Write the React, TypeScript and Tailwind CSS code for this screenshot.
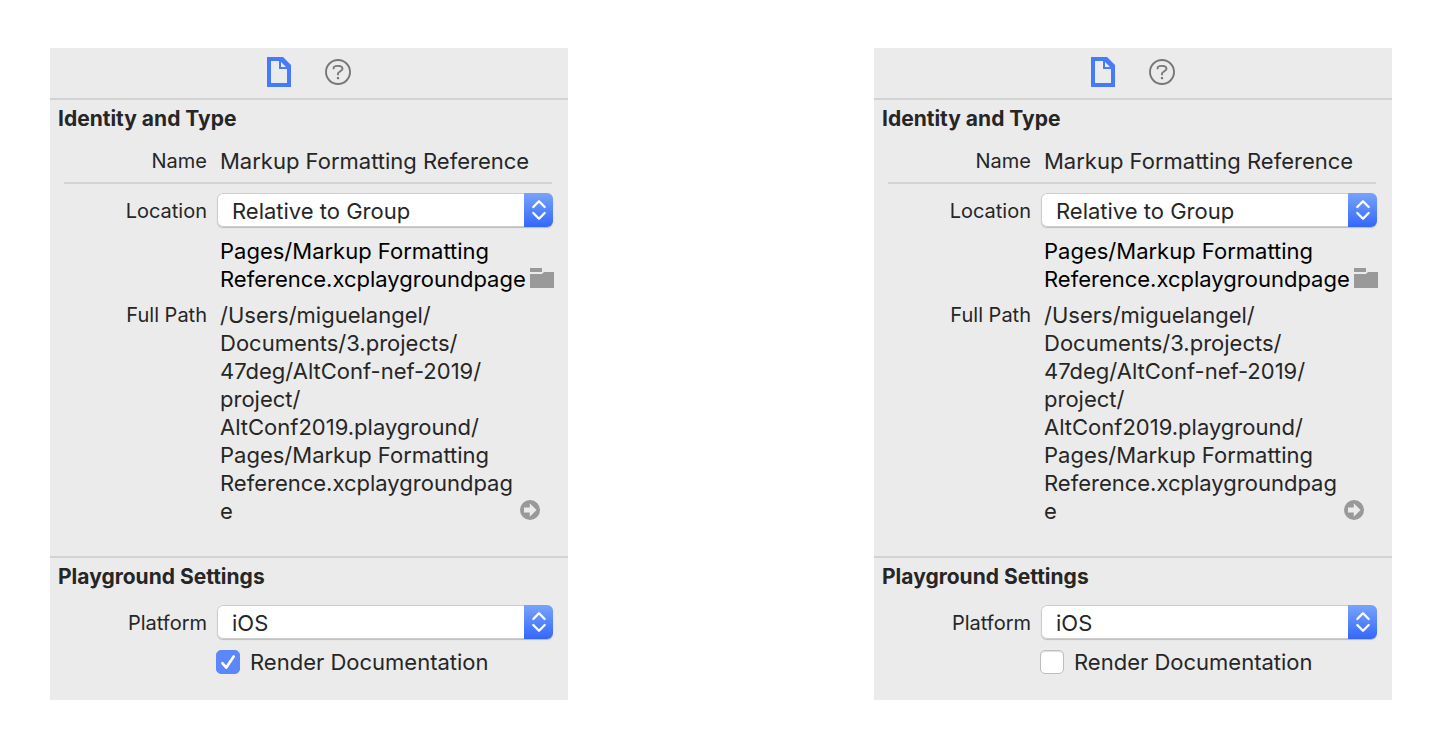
import { useId, useState } from "react";
import type { ReactNode } from "react";

const locationLines = ["Pages/Markup Formatting", "Reference.xcplaygroundpage"];

const fullPathLines = [
  "/Users/miguelangel/",
  "Documents/3.projects/",
  "47deg/AltConf-nef-2019/",
  "project/",
  "AltConf2019.playground/",
  "Pages/Markup Formatting",
  "Reference.xcplaygroundpag",
  "e",
];

function Row({ label, htmlFor, children }: { label?: string; htmlFor?: string; children: ReactNode }) {
  return (
    <div className="grid grid-cols-[157px_minmax(0,1fr)] gap-x-[9px] pr-[14px]">
      {htmlFor ? (
        <label htmlFor={htmlFor} className="text-right text-[20px] leading-[28px] pt-1">
          {label}
        </label>
      ) : (
        <span className="text-right text-[20px] leading-[28px]">{label}</span>
      )}
      {children}
    </div>
  );
}

function Lines({ lines }: { lines: string[] }) {
  return (
    <p className="pl-1 whitespace-nowrap">
      {lines.map((line) => (
        <span key={line} className="block">
          {line}
        </span>
      ))}
    </p>
  );
}

function PopUp({ id, options }: { id: string; options: string[] }) {
  return (
    <div className="ml-px mr-px flex h-[34px] overflow-hidden rounded-[6px] bg-white shadow-[inset_0_0_0_1px_#cdcdcd,0_1px_1px_#bcbcbc] relative">
      <select
        id={id}
        className="h-full w-full appearance-none bg-transparent pt-px pl-[15px] pr-8 text-[22px] leading-[28px] text-[#262626] outline-none"
      >
        {options.map((option) => (
          <option key={option}>{option}</option>
        ))}
      </select>
      <span className="pointer-events-none absolute inset-y-0 right-0 flex w-[29px] items-center justify-center bg-linear-to-b from-[#78a2fa] to-[#3566fb]">
        <svg width="16" height="24" viewBox="0 0 16 24" fill="none" stroke="#fff" strokeWidth="2.3" strokeLinecap="round" strokeLinejoin="round" aria-hidden="true">
          <path d="M2.300 9 8 3.200 13.700 9M2.300 15 8 20.800 13.700 15" />
        </svg>
      </span>
    </div>
  );
}

function Inspector({ rendered }: { rendered: boolean }) {
  const id = useId();
  const [checked, setChecked] = useState(rendered);

  return (
    <section className="w-full max-w-[518px] bg-[#ebebeb] pb-6 text-[22px] leading-[28px] text-[#262626]">
      <nav className="flex h-[52px] items-start justify-center gap-[33px] border-b-2 border-[#d3d3d3] pt-[9px]">
        <button type="button" aria-label="File inspector">
          <svg className="block" width="25" height="30" viewBox="0 0 25 30" aria-hidden="true">
            <path d="M0 0H16L24 8V30H0Z" fill="#457bfb" />
            <path d="M4 4H12V12H20V26H4Z" fill="#ebebeb" />
            <path d="M14 5 19 10H14Z" fill="#ebebeb" />
          </svg>
        </button>
        <button type="button" aria-label="Quick help" className="pt-[2px]">
          <svg className="block" width="26" height="26" viewBox="0 0 26 26" fill="none" stroke="#777" strokeWidth="1.9" aria-hidden="true">
            <circle cx="13" cy="13" r="12" />
            <path d="M8.600 10.200V9.200C8.600 7.500 10 6.900 13 6.900s4.500.8 4.500 2.900c0 2.600-4.500 2.700-4.500 4.700v1.800" />
            <path d="M13 18v2.200" strokeWidth="2.200" />
          </svg>
        </button>
      </nav>

      <h2 className="px-2 pt-[5px] text-[21px] font-bold">Identity and Type</h2>
      <div className="pt-[14px]">
        <Row label="Name">
          <p className="pl-1 whitespace-nowrap">Markup Formatting Reference</p>
        </Row>
      </div>
      <hr className="ml-[14px] mr-4 mt-[7px] border-t-2 border-[#d3d3d3]" />
      <div className="pt-[9px]">
        <Row label="Location" htmlFor={`${id}-location`}>
          <PopUp id={`${id}-location`} options={["Relative to Group", "Absolute Path"]} />
        </Row>
      </div>
      <div className="pt-[10px] text-black">
        <Row>
          <div className="flex items-end justify-between">
            <Lines lines={locationLines} />
            <button type="button" aria-label="Choose location" className="pb-[5px]">
              <svg className="block" width="24" height="20" viewBox="0 0 24 20" fill="#999" aria-hidden="true">
                <path d="M0 0H12V4H0ZM0 6H12L14 4H24V20H0Z" />
              </svg>
            </button>
          </div>
        </Row>
      </div>
      <div className="pt-2">
        <Row label="Full Path">
          <div className="flex items-end justify-between pr-[14px]">
            <Lines lines={fullPathLines} />
            <button type="button" aria-label="Reveal in Finder" className="pb-[5px]">
              <svg className="block" width="20" height="20" viewBox="0 0 20 20" aria-hidden="true">
                <circle cx="10" cy="10" r="10" fill="#999" />
                <path d="M4 7.500H9.800V3.300L16.500 10 9.800 16.700V12.500H4Z" fill="#ebebeb" />
              </svg>
            </button>
          </div>
        </Row>
      </div>

      <div className="mt-[31px] border-t-2 border-[#d3d3d3] pt-[5px]">
        <h2 className="px-2 text-[21px] font-bold">Playground Settings</h2>
        <div className="pt-[14px]">
          <Row label="Platform" htmlFor={`${id}-platform`}>
            <PopUp id={`${id}-platform`} options={["iOS", "macOS", "tvOS"]} />
          </Row>
        </div>
        <div className="pt-[9px]">
          <Row>
            <label className="flex items-center gap-[10px]">
              <span className="relative block h-6 w-6 shrink-0">
                <input
                  type="checkbox"
                  checked={checked}
                  onChange={(event) => setChecked(event.target.checked)}
                  className="block h-6 w-6 appearance-none rounded-[5px] border border-[#bdbdbd] bg-white shadow-[inset_0_1px_1px_#e0e0e0] checked:border-[#5b87fa] checked:bg-[#5b87fa] checked:shadow-none"
                />
                {checked && (
                  <svg className="pointer-events-none absolute inset-0" width="24" height="24" viewBox="0 0 24 24" fill="none" stroke="#fff" strokeWidth="2.7" strokeLinecap="round" strokeLinejoin="round" aria-hidden="true">
                    <path d="M6.500 13.300 10.300 17.500 17.700 6.500" />
                  </svg>
                )}
              </span>
              <span className="whitespace-nowrap">Render Documentation</span>
            </label>
          </Row>
        </div>
      </div>
    </section>
  );
}

export default function App() {
  return (
    <main className="flex min-h-screen items-start justify-between gap-8 bg-white px-[50px] py-12 font-['Inter',sans-serif]">
      <Inspector rendered={true} />
      <Inspector rendered={false} />
    </main>
  );
}
